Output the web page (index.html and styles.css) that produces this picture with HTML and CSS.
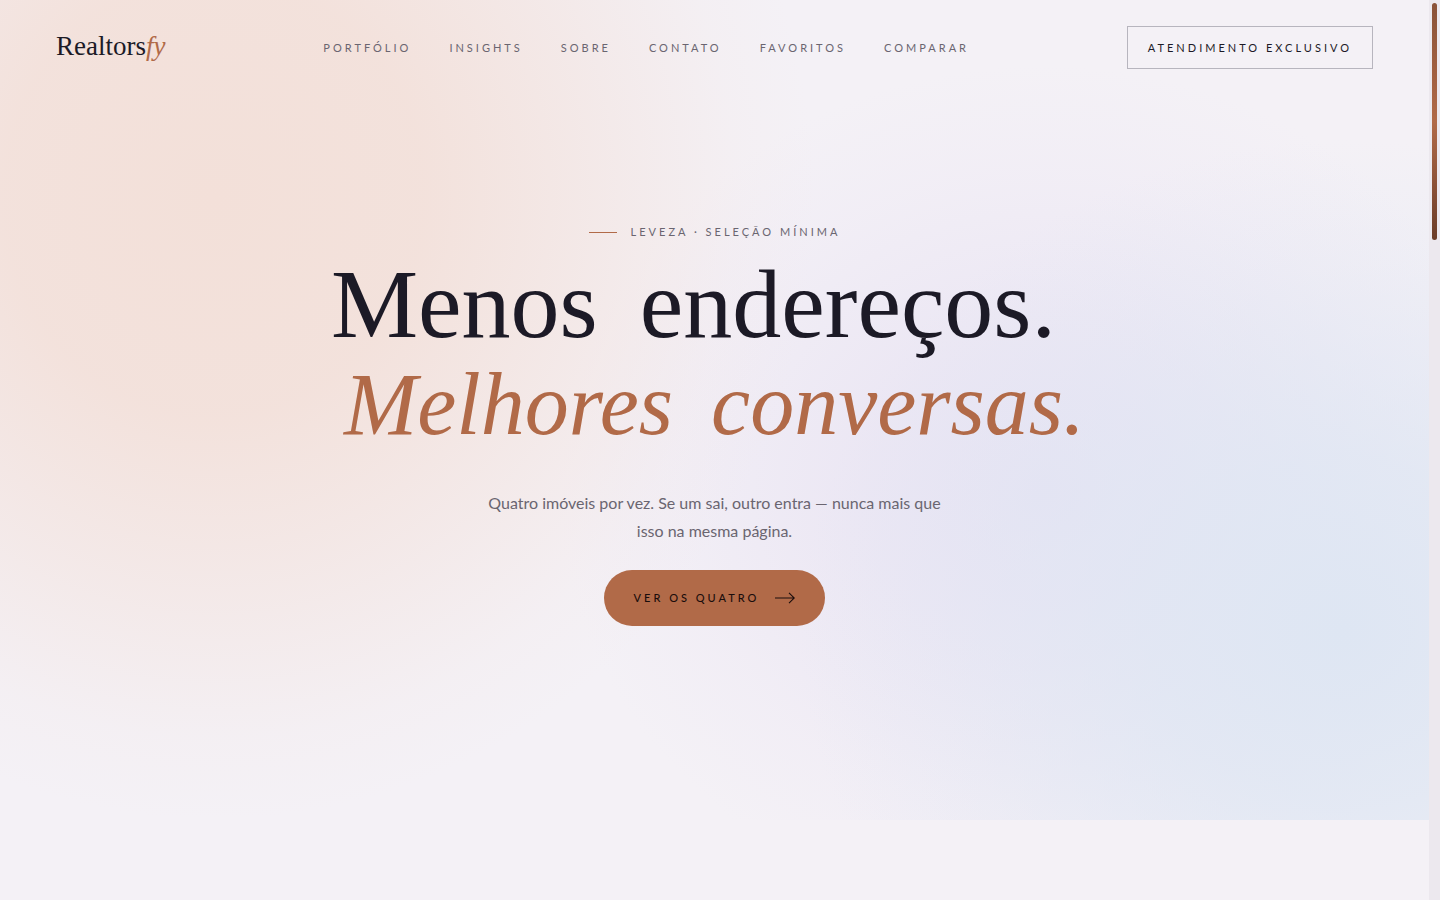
FILE: index.html
```html
<!DOCTYPE html>
<html lang="pt-BR">
<head>
    <meta charset="UTF-8">
    <meta name="viewport" content="width=device-width, initial-scale=1.0">
    <title>Realtorsfy</title>
    <link rel="stylesheet" href="styles.css">
</head>
<body>
    <div class="page">
        <div class="hero">
            <header class="header">
                <a href="#" class="logo">Realtors<em>fy</em></a>
                <nav class="nav">
                    <a href="#portfolio">Portfólio</a>
                    <a href="#insights">Insights</a>
                    <a href="#sobre">Sobre</a>
                    <a href="#contato">Contato</a>
                    <a href="#favoritos">Favoritos</a>
                    <a href="#comparar">Comparar</a>
                </nav>
                <a href="#atendimento" class="header-cta">Atendimento exclusivo</a>
            </header>

            <main class="hero-content">
                <p class="eyebrow">Leveza · Seleção mínima</p>
                <h1 class="title">
                    <span class="line"><span class="word">Menos</span> <span class="word">endereços.</span></span>
                    <em class="line"><span>Melhores</span> <span>conversas.</span></em>
                </h1>
                <p class="lead">Quatro imóveis por vez. Se um sai, outro entra — nunca mais que isso na mesma página.</p>
                <a href="#portfolio" class="btn">
                    Ver os quatro
                    <svg width="20" height="12" viewBox="0 0 20 12" fill="none" stroke="currentColor" stroke-width="1.1" aria-hidden="true">
                        <path d="M0 6h19.3M14 .8L19.3 6 14 11.2"/>
                    </svg>
                </a>
            </main>
        </div>
    </div>

    <!-- Scroll rail -->
    <div class="rail" aria-hidden="true">
        <div class="thumb"></div>
    </div>
</body>
</html>
```
FILE: styles.css
```css
* {
    margin: 0;
    padding: 0;
    box-sizing: border-box;
}

body {
    display: flex;
    min-height: 100vh;
    background: #f4f1f6;
    color: #1c1a26;
    font-family: Lato, "Liberation Sans", sans-serif;
}

a {
    color: inherit;
    text-decoration: none;
}

.page {
    flex: 1;
    min-width: 0;
}

.hero {
    background:
        radial-gradient(ellipse 42% 76% at 15% 24%, #f3e0d9 0%, rgba(243, 224, 217, 0.9) 35%, rgba(243, 224, 217, 0.45) 65%, rgba(243, 224, 217, 0.1) 87%, rgba(243, 224, 217, 0) 100%),
        radial-gradient(ellipse 38% 60% at 94% 77%, #dee6f3 0%, rgba(222, 230, 243, 0.75) 35%, rgba(222, 230, 243, 0.25) 75%, rgba(222, 230, 243, 0) 100%),
        radial-gradient(ellipse 34% 52% at 73% 60%, #e7e3f3 0%, rgba(232, 227, 243, 0.75) 35%, rgba(234, 228, 244, 0.25) 75%, rgba(234, 228, 244, 0) 100%),
        #f4f1f6;
}

/* Header */
.header {
    display: flex;
    align-items: center;
    justify-content: space-between;
    padding: 26px 56px;
}

.logo {
    padding-bottom: 4px;
    font-family: "Liberation Serif", serif;
    font-size: 27px;
    line-height: 36px;
}

.logo em {
    color: #b16a48;
}

.nav {
    display: flex;
    gap: 38px;
    color: #6a6570;
}

.nav a,
.header-cta,
.btn {
    font-size: 11px;
    line-height: 15px;
    letter-spacing: 3px;
    text-transform: uppercase;
}

.header-cta {
    padding: 13px 20px;
    border: 1px solid #b7b5be;
}

/* Hero */
.hero-content {
    display: flex;
    flex-direction: column;
    align-items: center;
    padding: 130px 24px 194px;
    text-align: center;
}

.eyebrow {
    display: flex;
    align-items: center;
    gap: 14px;
    margin-bottom: 16px;
    color: #6a6570;
    font-size: 11px;
    line-height: 14px;
    letter-spacing: 3px;
    text-transform: uppercase;
}

.eyebrow::before {
    content: "";
    width: 28px;
    height: 1px;
    background: #b16a48;
}

.title {
    margin-bottom: 32px;
    font-family: "Liberation Serif", serif;
    font-size: 98px;
    font-weight: 400;
    line-height: 98px;
}

.line {
    display: flex;
    flex-wrap: wrap;
    justify-content: center;
}

.word {
    margin-right: 42px;
}

em.line {
    gap: 0 38px;
    color: #b16a48;
    font-size: 88px;
    line-height: 104px;
}

.lead {
    max-width: 480px;
    margin-bottom: 25px;
    color: #6a6570;
    font-size: 16px;
    line-height: 28px;
}

.btn {
    display: inline-flex;
    align-items: center;
    gap: 16px;
    padding: 20px 30px;
    border-radius: 28px;
    background: #b16a48;
    color: #1a0d0c;
    font-weight: 500;
    line-height: 16px;
}

/* Scroll rail */
.rail {
    width: 11px;
    padding: 3px;
    background: #ece8ee;
}

.thumb {
    width: 5px;
    height: 237px;
    border-radius: 3px;
    background: linear-gradient(#8a5238, #b16a48 50%, #6b3c28);
}
```
